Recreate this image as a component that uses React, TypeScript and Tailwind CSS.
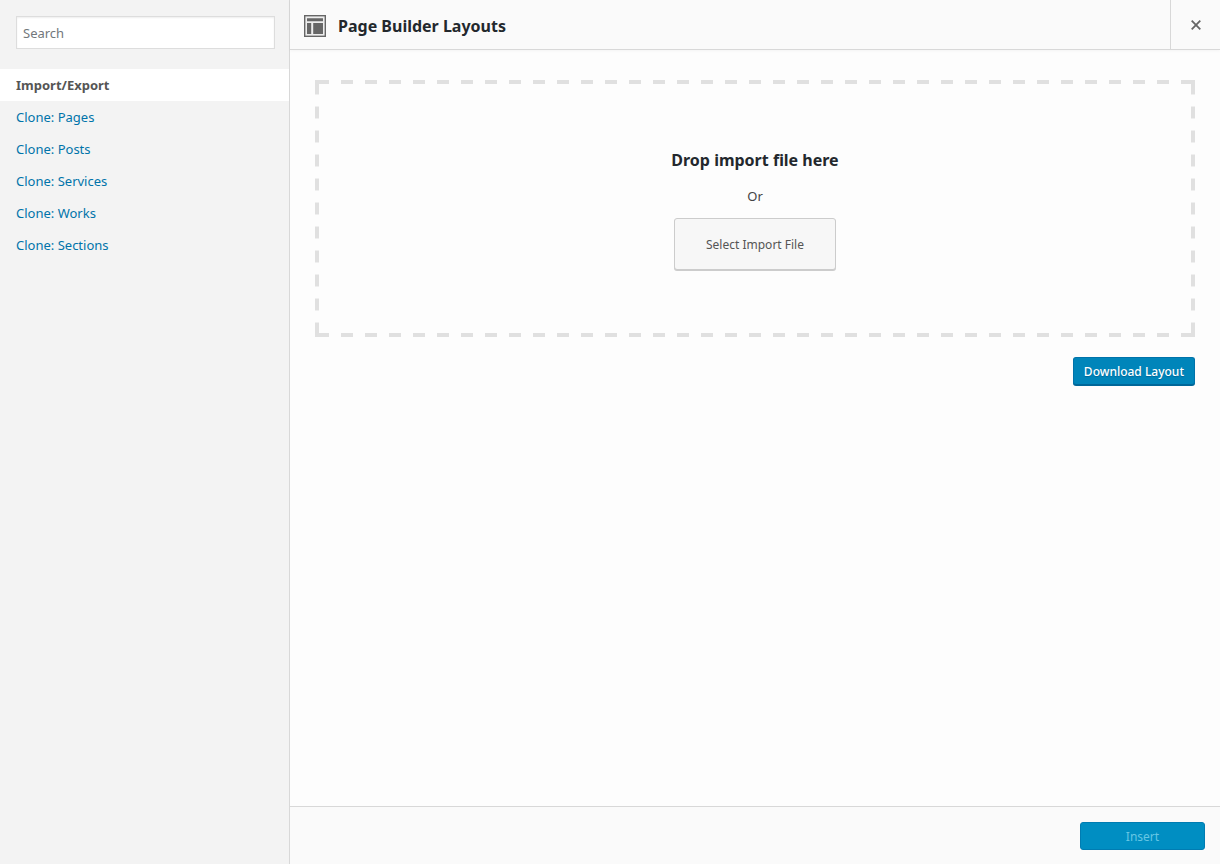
import React, { useState } from "react";

const sidebarItems = [
    'Clone: Pages',
    'Clone: Posts',
    'Clone: Services',
    'Clone: Works',
    'Clone: Sections',
];

// long dashes on every side, with a solid square in each corner
const dashedBox = [
    'bg-[linear-gradient(90deg,transparent_6px,#e0e0e0_6px,#e0e0e0_18px,transparent_18px),linear-gradient(90deg,transparent_6px,#e0e0e0_6px,#e0e0e0_18px,transparent_18px),linear-gradient(transparent_6px,#e0e0e0_6px,#e0e0e0_18px,transparent_18px),linear-gradient(transparent_6px,#e0e0e0_6px,#e0e0e0_18px,transparent_18px),linear-gradient(#e0e0e0,#e0e0e0),linear-gradient(#e0e0e0,#e0e0e0),linear-gradient(#e0e0e0,#e0e0e0),linear-gradient(#e0e0e0,#e0e0e0)]',
    '[background-size:24px_4px,24px_4px,4px_24px,4px_24px,4px_4px,4px_4px,4px_4px,4px_4px]',
    '[background-position:center_top,center_bottom,left_center,right_center,left_top,right_top,left_bottom,right_bottom]',
    '[background-repeat:repeat-x,repeat-x,repeat-y,repeat-y,no-repeat,no-repeat,no-repeat,no-repeat]',
].join(' ');

function LayoutIcon() {
    return (
        <svg width="22" height="22" viewBox="0 0 22 22" aria-hidden="true">
            <rect width="22" height="22" fill="#666" />
            <rect x="1.4" y="1.4" width="19.2" height="19.2" fill="#ededed" />
            <path fill="#666" d="M3 3.3h16v3H3zM3 8h4.2v11H3zM9.2 8H19v11H9.2z" />
        </svg>
    );
}

function CloseIcon() {
    return (
        <svg width="10" height="10" viewBox="0 0 10 10" aria-hidden="true">
            <path d="M.7 .7l8.6 8.6M9.3 .7L.7 9.3" stroke="#666" strokeWidth="1.8" />
        </svg>
    );
}

function App() {
    const [search, setSearch] = useState('');

    return (
        <div className="flex min-h-screen bg-[#fdfdfd] font-['Noto_Sans',sans-serif] text-[13px] leading-5 text-[#444]">
            <aside className="w-[290px] shrink-0 border-r border-[#d8d8d8] bg-[#f3f3f3]">
                <div className="pt-4 pr-[14px] pb-5 pl-4">
                    <input
                        type="text"
                        aria-label="Search"
                        placeholder="Search"
                        value={search}
                        onChange={(e) => setSearch(e.target.value)}
                        className="block h-[33px] w-full border border-[#ddd] bg-white px-1.5 shadow-[inset_0_1px_2px_rgba(0,0,0,0.07)] outline-none placeholder:text-[#72777c]" />
                </div>
                <nav>
                    <a href="#import" className="block bg-white px-4 py-1.5 font-bold text-[#555]">Import/Export</a>
                    {sidebarItems.map((item) => (
                        <a key={item} href="#clone" className="block px-4 py-1.5 text-[#0073aa]">{item}</a>
                    ))}
                </nav>
            </aside>

            <div className="flex min-w-0 flex-1 flex-col">
                <header className="flex h-[50px] items-stretch border-b border-[#d8d8d8] bg-[#fafafa] shadow-[0_1px_3px_rgba(0,0,0,0.04)]">
                    <div className="flex flex-1 items-center gap-3 px-3.5 pt-0.5">
                        <LayoutIcon />
                        <h1 className="text-base font-bold text-[#23282d]">Page Builder Layouts</h1>
                    </div>
                    <button type="button" aria-label="Close" className="flex w-[50px] cursor-pointer items-center justify-center border-l border-[#d8d8d8]">
                        <CloseIcon />
                    </button>
                </header>

                <main className="flex-1 px-[25px] pt-[30px]">
                    <div className={`flex h-[257px] flex-col items-center pt-[70px] ${dashedBox}`}>
                        <h2 className="text-base leading-5 font-bold text-[#23282d]">Drop import file here</h2>
                        <p className="mt-4 mb-3">Or</p>
                        <button type="button" className="h-[52px] cursor-pointer rounded-[3px] border border-[#ccc] bg-[#f7f7f7] px-[31px] pt-0.5 text-xs text-[#555] shadow-[0_1px_0_#ccc]">
                            Select Import File
                        </button>
                    </div>
                    <div className="mt-5 flex justify-end">
                        <button type="button" className="h-7 cursor-pointer rounded-[3px] border border-[#0073aa] border-b-[#006799] bg-[#0085ba] px-2.5 pt-0.5 text-xs font-medium text-white shadow-[0_1px_0_#006799] text-shadow-[0_1px_1px_#006799]">
                            Download Layout
                        </button>
                    </div>
                </main>

                <footer className="flex h-[58px] items-start justify-end border-t border-[#d8d8d8] bg-[#fafafa] px-[15px] pt-[15px]">
                    <button type="button" disabled className="h-7 w-[125px] rounded-[3px] border border-[#007cb2] bg-[#008ec2] pt-0.5 text-xs text-[#66c6e4]">
                        Insert
                    </button>
                </footer>
            </div>
        </div>
    );
}

export default App;
